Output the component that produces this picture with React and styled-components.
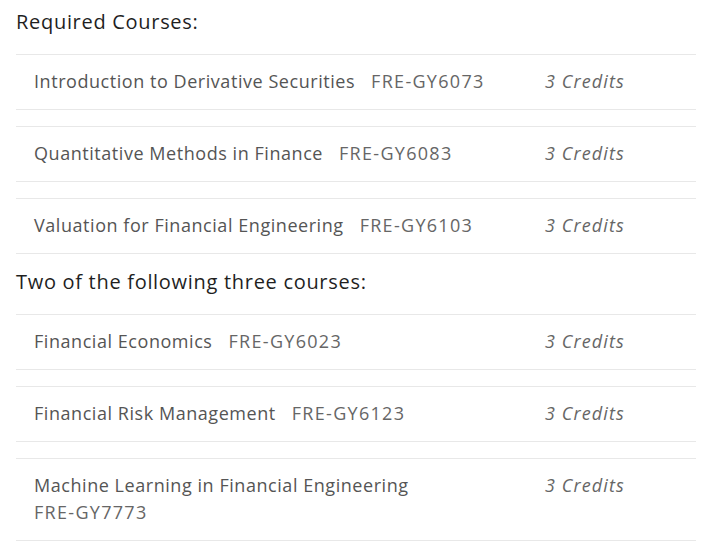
import React from 'react';
import styled, { createGlobalStyle } from 'styled-components';

const GlobalStyle = createGlobalStyle`
  body {
    margin: 0;
    background: #fff;
    font-family: "Open Sans", "Liberation Sans", sans-serif;
  }
`

const Wrapper = styled.div`
  width: 680px;
  padding: 8px 0 0 16px;
`

const Heading = styled.h3`
  margin: ${props => props.first ? '0' : '14px'} 0 18px 0;
  font-size: 20px;
  line-height: 28px;
  font-weight: 500;
  letter-spacing: 0.7px;
  color: #1f1f1f;
`

const List = styled.ul`
  list-style: none;
  margin: 0;
  padding: 0;
  display: flex;
  flex-direction: column;
  gap: 16px;
`

const Row = styled.li`
  display: grid;
  grid-template-columns: 495px 1fr;
  column-gap: 16px;
  padding: 13px 18px 14px 18px;
  border-top: 1px solid #e8e8e8;
  border-bottom: 1px solid #e8e8e8;
  line-height: 27px;
  font-size: 18px;
`

const Title = styled.div`
  color: #555;
`

const Name = styled.span`
  font-weight: 500;
  letter-spacing: 0.55px;
  margin-right: 16px;
`

const Code = styled.span`
  display: inline-block;
  white-space: nowrap;
  color: #666;
  letter-spacing: 1.3px;
`

const Credits = styled.div`
  font-style: italic;
  color: #666;
  letter-spacing: 1.1px;
`

const required = [
  { name: 'Introduction to Derivative Securities', code: 'FRE-GY6073' },
  { name: 'Quantitative Methods in Finance', code: 'FRE-GY6083' },
  { name: 'Valuation for Financial Engineering', code: 'FRE-GY6103' },
];

const electives = [
  { name: 'Financial Economics', code: 'FRE-GY6023' },
  { name: 'Financial Risk Management', code: 'FRE-GY6123' },
  { name: 'Machine Learning in Financial Engineering', code: 'FRE-GY7773' },
];

const CourseList = ({ courses }) => (
  <List>
    {courses.map(c => (
      <Row key={c.code}>
        <Title>
          <Name>{c.name}</Name>
          <Code>{c.code}</Code>
        </Title>
        <Credits>3 Credits</Credits>
      </Row>
    ))}
  </List>
);

export default function App() {
  return (
    <Wrapper>
      <GlobalStyle />
      <Heading first>Required Courses:</Heading>
      <CourseList courses={required} />
      <Heading>Two of the following three courses:</Heading>
      <CourseList courses={electives} />
    </Wrapper>
  );
}
